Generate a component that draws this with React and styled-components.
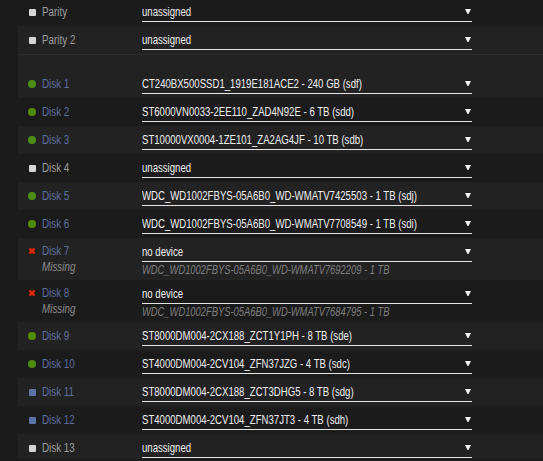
// react
import React from 'react';

// styled components
import styled, { createGlobalStyle } from 'styled-components';

const GlobalStyle = createGlobalStyle`
  html, body {
    margin: 0;
    padding: 0;
    background: #1b1b1b;
    overflow: hidden;
  }
  body {
    font-family: "Liberation Sans", Arial, sans-serif;
    font-size: 12px;
  }
`

const devices = [
  { name: 'Parity', status: 'off', value: 'unassigned' },
  { name: 'Parity 2', status: 'off', value: 'unassigned' },
  { spacer: true },
  { name: 'Disk 1', status: 'ok', value: 'CT240BX500SSD1_1919E181ACE2 - 240 GB (sdf)' },
  { name: 'Disk 2', status: 'ok', value: 'ST6000VN0033-2EE110_ZAD4N92E - 6 TB (sdd)' },
  { name: 'Disk 3', status: 'ok', value: 'ST10000VX0004-1ZE101_ZA2AG4JF - 10 TB (sdb)' },
  { name: 'Disk 4', status: 'off', value: 'unassigned' },
  { name: 'Disk 5', status: 'ok', value: 'WDC_WD1002FBYS-05A6B0_WD-WMATV7425503 - 1 TB (sdj)' },
  { name: 'Disk 6', status: 'ok', value: 'WDC_WD1002FBYS-05A6B0_WD-WMATV7708549 - 1 TB (sdi)' },
  { name: 'Disk 7', status: 'missing', value: 'no device', old: 'WDC_WD1002FBYS-05A6B0_WD-WMATV7692209 - 1 TB' },
  { name: 'Disk 8', status: 'missing', value: 'no device', old: 'WDC_WD1002FBYS-05A6B0_WD-WMATV7684795 - 1 TB' },
  { name: 'Disk 9', status: 'ok', value: 'ST8000DM004-2CX188_ZCT1Y1PH - 8 TB (sde)' },
  { name: 'Disk 10', status: 'ok', value: 'ST4000DM004-2CV104_ZFN37JZG - 4 TB (sdc)' },
  { name: 'Disk 11', status: 'new', value: 'ST8000DM004-2CX188_ZCT3DHG5 - 8 TB (sdg)' },
  { name: 'Disk 12', status: 'new', value: 'ST4000DM004-2CV104_ZFN37JT3 - 4 TB (sdh)' },
  { name: 'Disk 13', status: 'off', value: 'unassigned' },
]

// backgrounds follow the reference: parity rows dark/light, array rows light/dark
const shades = ['dark', 'light', 'light', 'light', 'dark', 'light', 'dark', 'light', 'dark', 'light', 'dark', 'light', 'dark', 'light', 'dark', 'light']

const StatusIcon = ({ status }) => {
  if (status === 'missing') {
    return (
      <IconBox>
        <svg width="8" height="8" viewBox="0 0 8 8">
          <path d="M1.5 1.5 L6.5 6.5 M6.5 1.5 L1.5 6.5" stroke="#ff2a00" strokeWidth="2" />
        </svg>
      </IconBox>
    );
  }
  return <IconBox><Dot status={status} /></IconBox>;
}

const Caret = () => (
  <svg width="6" height="5" viewBox="0 0 6 5">
    <polygon points="0,0 6,0 3.5,5 2.5,5" fill="#f0f0f0" />
  </svg>
)

const App = () => {
  return (
    <>
      <GlobalStyle />
      <Page>
        <Table>
          {devices.map((d, i) => {
            if (d.spacer) return <Spacer key={i} />;
            const missing = d.status === 'missing';
            return (
              <Row key={i} shade={shades[i]} tall={missing}>
                <NameCell tall={missing}>
                  <NameLine>
                    <StatusIcon status={d.status} />
                    <Name assigned={d.status !== 'off'}>{d.name}</Name>
                  </NameLine>
                  {missing && <Missing>Missing</Missing>}
                </NameCell>
                <SelectCell>
                  <Select>
                    <SelectText squeeze={0.8}>{d.value}</SelectText>
                    <Caret />
                  </Select>
                  {missing && <OldDevice>{d.old}</OldDevice>}
                </SelectCell>
              </Row>
            );
          })}
        </Table>
      </Page>
    </>
  );
}

// styled components

const Page = styled.div`
  width: 543px;
  height: 461px;
  background: #1b1b1b;
  padding-left: 18px;
  box-sizing: border-box;
`

const Table = styled.div`
  display: flex;
  flex-direction: column;
  margin-top: -2px;
`

const Row = styled.div`
  display: grid;
  grid-template-columns: 114px 330px;
  padding-left: 10px;
  height: ${props => props.tall ? '42px' : '28px'};
  background: ${props => props.shade === 'light' ? '#222222' : '#1b1b1b'};
`

const Spacer = styled.div`
  height: 15px;
  border-top: 1px solid #2c2c2c;
  background: #222222;
`

const NameCell = styled.div`
  display: flex;
  flex-direction: column;
  justify-content: ${props => props.tall ? 'flex-start' : 'center'};
  padding-top: ${props => props.tall ? '4px' : '0'};
`

const NameLine = styled.div`
  display: flex;
  align-items: center;
  height: 17px;
`

const IconBox = styled.span`
  width: 8px;
  height: 8px;
  margin-right: 6px;
  display: flex;
  align-items: center;
  justify-content: center;
`

const Dot = styled.span`
  display: block;
  width: ${props => props.status === 'ok' ? '8px' : '7px'};
  height: ${props => props.status === 'ok' ? '8px' : '7px'};
  border-radius: ${props => props.status === 'ok' ? '50%' : '1px'};
  background: ${props =>
    props.status === 'ok' ? '#4e8c0e' :
    props.status === 'new' ? '#5b73a8' : '#d6d6d6'};
`

// the original UI font is a narrow sans; squeeze Liberation Sans to its width
const Narrow = styled.span`
  display: inline-block;
  white-space: nowrap;
  transform: scaleX(${props => props.squeeze || 0.82});
  transform-origin: left center;
`

const Name = styled(Narrow)`
  color: ${props => props.assigned ? '#5d6f9e' : '#9d9d9d'};
  font-size: 12px;
`

const Missing = styled.div`
  color: #8c8c8c;
  font-style: italic;
  font-size: 12px;
  height: 17px;
  line-height: 17px;
  padding-left: 14px;
  white-space: nowrap;
  transform: scaleX(0.82);
  transform-origin: 14px center;
`

const SelectCell = styled.div`
  display: flex;
  flex-direction: column;
  padding-top: 4px;
`

const Select = styled.div`
  display: grid;
  grid-template-columns: minmax(0, 1fr) auto;
  align-items: center;
  height: 19px;
  padding-right: 1px;
  border-bottom: 1px solid #e6e6e6;
  color: #f0f0f0;
  font-size: 12px;
`

const SelectText = styled(Narrow)``

const OldDevice = styled.div`
  color: #7e7e7e;
  font-style: italic;
  font-size: 12px;
  line-height: 16px;
  white-space: nowrap;
  transform: scaleX(0.78);
  transform-origin: left center;
`

export default App;
